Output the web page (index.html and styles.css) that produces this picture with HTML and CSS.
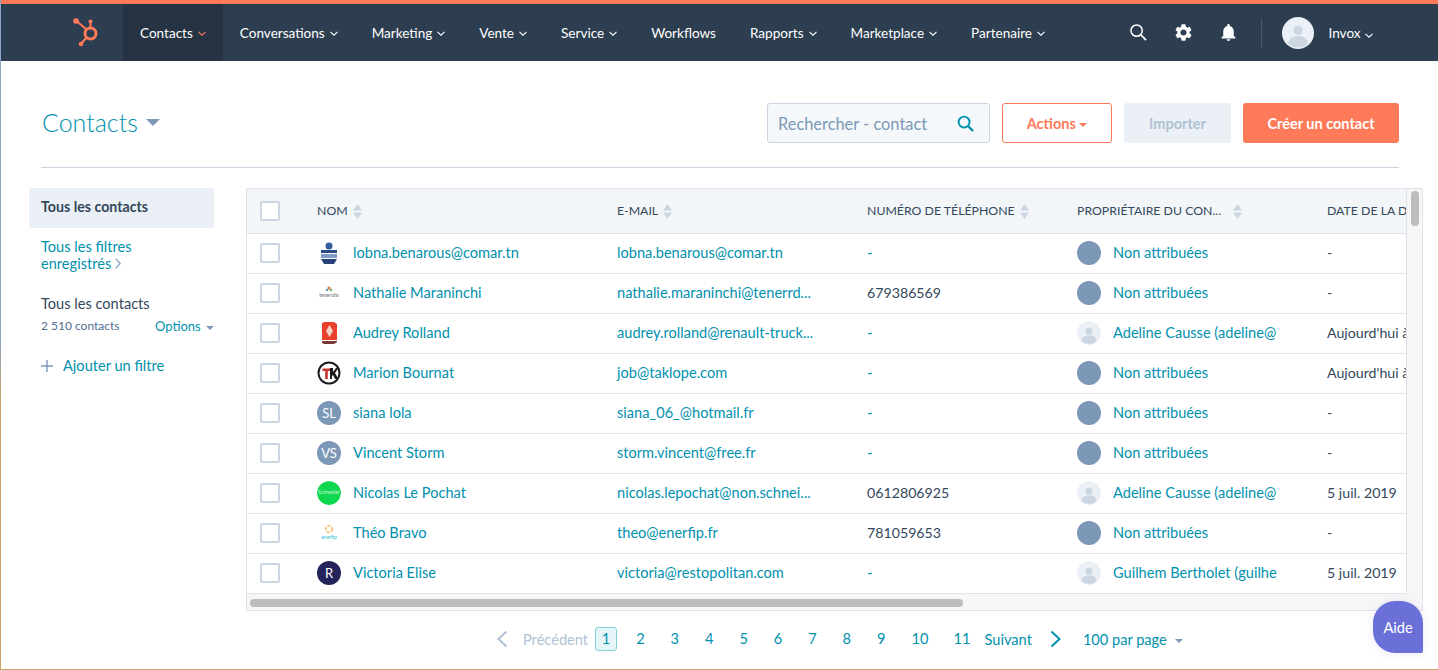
FILE: index.html
```html
<!DOCTYPE html>
<html lang="fr">
<head>
    <meta charset="UTF-8">
    <meta name="viewport" content="width=device-width, initial-scale=1.0">
    <title>Contacts</title>
    <link rel="stylesheet" href="styles.css">
</head>
<body>

    <svg class="defs" width="0" height="0">
        <symbol id="chev" viewBox="0 0 8 5"><path d="M.5.8 4 4.2 7.5.8" fill="none" stroke="currentColor" stroke-width="1.1"/></symbol>
        <symbol id="sort" viewBox="0 0 9 15"><path d="M4.500 0 9 6.500H0z M0 8.500H9L4.500 15z" fill="#cbd6e2"/></symbol>
        <symbol id="person" viewBox="0 0 32 32"><circle cx="16" cy="16" r="16" fill="#eaf0f6"/><circle cx="16" cy="13.500" r="4.500" fill="#cbd6e2"/><path d="M6 27c1-6 5-8 10-8s9 2 10 8a16 16 0 0 1-20 0z" fill="#cbd6e2"/></symbol>
    </svg>

    <nav class="topbar">
        <a class="logo">
            <svg width="26" height="30" viewBox="0 0 26 30">
                <g fill="none" stroke="#ff7a59">
                    <circle cx="17.500" cy="15.500" r="5.500" stroke-width="3"/>
                    <path d="M17.500 9V3M3.500 3l10 8.500M13 20l-4.500 5.500" stroke-width="2"/>
                </g>
                <g fill="#ff7a59"><circle cx="3" cy="3" r="2.800"/><circle cx="17.500" cy="3.500" r="2"/><circle cx="8" cy="26" r="2.300"/></g>
            </svg>
        </a>
        <ul class="menu">
            <li class="active">Contacts <svg class="chev"><use href="#chev"/></svg></li>
            <li>Conversations <svg class="chev"><use href="#chev"/></svg></li>
            <li>Marketing <svg class="chev"><use href="#chev"/></svg></li>
            <li>Vente <svg class="chev"><use href="#chev"/></svg></li>
            <li>Service <svg class="chev"><use href="#chev"/></svg></li>
            <li>Workflows</li>
            <li>Rapports <svg class="chev"><use href="#chev"/></svg></li>
            <li>Marketplace <svg class="chev"><use href="#chev"/></svg></li>
            <li>Partenaire <svg class="chev"><use href="#chev"/></svg></li>
        </ul>
        <div class="nav-tools">
            <svg class="tool" viewBox="0 0 18 18"><circle cx="7" cy="7" r="6" fill="none" stroke="#fff" stroke-width="1.600"/><path d="M11.500 11.500 17 17" stroke="#fff" stroke-width="1.800"/></svg>
            <svg class="tool" viewBox="2 2 20 20"><path fill="#fff" d="M19.140 12.940c.04-.3.06-.61.06-.94 0-.32-.02-.64-.07-.94l2.030-1.580a.49.49 0 0 0 .12-.61l-1.920-3.320a.488.488 0 0 0-.59-.22l-2.390.96c-.5-.38-1.030-.7-1.620-.94l-.36-2.540a.484.484 0 0 0-.48-.41h-3.840c-.24 0-.43.17-.47.41l-.36 2.540c-.59.24-1.130.57-1.620.94l-2.390-.96c-.22-.08-.47 0-.59.22L2.740 8.870c-.12.21-.08.47.12.61l2.030 1.580c-.05.3-.09.63-.09.94s.02.64.07.94l-2.030 1.580a.49.49 0 0 0-.12.61l1.920 3.320c.12.22.37.29.59.22l2.390-.96c.5.38 1.030.7 1.620.94l.36 2.540c.05.24.24.41.48.41h3.840c.24 0 .44-.17.47-.41l.36-2.540c.59-.24 1.130-.56 1.620-.94l2.390.96c.22.08.47 0 .59-.22l1.920-3.320c.12-.22.07-.47-.12-.61l-2.010-1.580zM12 15.600c-1.980 0-3.600-1.620-3.600-3.600s1.620-3.600 3.600-3.600 3.600 1.620 3.600 3.600-1.620 3.600-3.600 3.600z"/></svg>
            <svg class="tool" viewBox="4 2.500 16 19.500"><path fill="#fff" d="M12 22c1.100 0 2-.9 2-2h-4c0 1.100.89 2 2 2zm6-6v-5c0-3.070-1.640-5.640-4.500-6.320V4c0-.83-.67-1.500-1.500-1.500s-1.500.67-1.500 1.500v.68C7.630 5.360 6 7.920 6 11v5l-2 2v1h16v-1l-2-2z"/></svg>
        </div>
        <div class="account">
            <svg class="account-pic"><use href="#person"/></svg>
            <span>Invox <svg class="chev"><use href="#chev"/></svg></span>
        </div>
    </nav>

    <header class="page-head">
        <h1>Contacts <span class="caret big"></span></h1>
        <div class="head-actions">
            <div class="search">
                <span>Rechercher - contact</span>
                <svg width="17" height="17" viewBox="0 0 18 18"><circle cx="7.500" cy="7.500" r="5.800" fill="none" stroke="#0091ae" stroke-width="2"/><path d="M12 12l5 5" stroke="#0091ae" stroke-width="2.400"/></svg>
            </div>
            <button class="btn btn-outline">Actions <span class="caret small"></span></button>
            <button class="btn btn-off">Importer</button>
            <button class="btn btn-main">Créer un contact</button>
        </div>
    </header>

    <main class="content">
        <aside class="sidebar">
            <div class="side-selected">Tous les contacts</div>
            <a class="side-link">Tous les filtres<br>enregistrés <svg class="side-arrow" width="6" height="11" viewBox="0 0 6 11"><path d="M.7.7 5.200 5.500.7 10.300" fill="none" stroke="#7c98b6" stroke-width="1.100"/></svg></a>
            <div class="side-title">Tous les contacts</div>
            <div class="side-meta">
                <span>2 510 contacts</span>
                <a>Options <span class="caret tiny"></span></a>
            </div>
            <a class="side-add"><svg width="12" height="12" viewBox="0 0 12 12"><path d="M6 0v12M0 6h12" stroke="#7c98b6" stroke-width="1.400"/></svg> Ajouter un filtre</a>
        </aside>

        <section class="grid-box">
            <div class="grid-main">
                <div class="grid-view">
                    <table class="contacts">
                        <colgroup><col class="c-check"><col class="c-name"><col class="c-mail"><col class="c-phone"><col class="c-owner"><col class="c-date"></colgroup>
                        <thead>
                            <tr>
                                <th><span class="box"></span></th>
                                <th>NOM <svg class="sort"><use href="#sort"/></svg></th>
                                <th>E-MAIL <svg class="sort"><use href="#sort"/></svg></th>
                                <th>NUMÉRO DE TÉLÉPHONE <svg class="sort"><use href="#sort"/></svg></th>
                                <th>PROPRIÉTAIRE DU CON... <svg class="sort sort-far"><use href="#sort"/></svg></th>
                                <th>DATE DE LA D</th>
                            </tr>
                        </thead>
                        <tbody>
                            <tr>
                                <td><span class="box"></span></td>
                                <td><div class="who">
                                    <svg class="pic" viewBox="0 0 24 24"><circle cx="12" cy="5" r="3.500" fill="#2f5d9b"/><rect x="4" y="9" width="16" height="3" fill="#2b4a86"/><rect x="4" y="13" width="16" height="4" fill="#7f9ac4"/><path d="M4 18h16l-3 5H7z" fill="#27407a"/></svg>
                                    <a>lobna.benarous@comar.tn</a>
                                </div></td>
                                <td><a>lobna.benarous@comar.tn</a></td>
                                <td><a>-</a></td>
                                <td><div class="who"><span class="pic none"></span><a class="owner">Non attribuées</a></div></td>
                                <td>-</td>
                            </tr>
                            <tr>
                                <td><span class="box"></span></td>
                                <td><div class="who">
                                    <svg class="pic" viewBox="0 0 24 24"><circle cx="12" cy="7" r="1.600" fill="#e0784a"/><circle cx="10" cy="9" r="1.300" fill="#5aa9c9"/><circle cx="14" cy="9" r="1.300" fill="#7db36a"/><text x="12" y="16" class="pic-word" fill="#6d6d78">tenerrdis</text></svg>
                                    <a>Nathalie Maraninchi</a>
                                </div></td>
                                <td><a>nathalie.maraninchi@tenerrd...</a></td>
                                <td>679386569</td>
                                <td><div class="who"><span class="pic none"></span><a class="owner">Non attribuées</a></div></td>
                                <td>-</td>
                            </tr>
                            <tr>
                                <td><span class="box"></span></td>
                                <td><div class="who">
                                    <svg class="pic" viewBox="0 0 24 24"><rect x="5" y="1" width="15" height="18" fill="#e8402c"/><path d="M12.500 4 16 10l-3.500 6L9 10z" fill="#f6d2c4"/><rect x="5" y="20" width="15" height="3" fill="#7a3a34"/></svg>
                                    <a>Audrey Rolland</a>
                                </div></td>
                                <td><a>audrey.rolland@renault-truck...</a></td>
                                <td><a>-</a></td>
                                <td><div class="who"><svg class="pic"><use href="#person"/></svg><a class="owner">Adeline Causse (adeline@</a></div></td>
                                <td>Aujourd'hui à</td>
                            </tr>
                            <tr>
                                <td><span class="box"></span></td>
                                <td><div class="who">
                                    <svg class="pic" viewBox="0 0 24 24"><circle cx="12" cy="12" r="10.500" fill="#fff" stroke="#1c1c1c" stroke-width="2"/><path d="M5.500 7.500h8v2.500h-2.700v8H8.200v-8H5.500z" fill="#c8302c"/><path d="M13 7h3v4l3-4h2.500l-3.500 5 3.500 6H18l-2-4-1 1v3h-2z" fill="#1c1c1c"/></svg>
                                    <a>Marion Bournat</a>
                                </div></td>
                                <td><a>job@taklope.com</a></td>
                                <td><a>-</a></td>
                                <td><div class="who"><span class="pic none"></span><a class="owner">Non attribuées</a></div></td>
                                <td>Aujourd'hui à</td>
                            </tr>
                            <tr>
                                <td><span class="box"></span></td>
                                <td><div class="who"><span class="pic none">SL</span><a>siana lola</a></div></td>
                                <td><a>siana_06_@hotmail.fr</a></td>
                                <td><a>-</a></td>
                                <td><div class="who"><span class="pic none"></span><a class="owner">Non attribuées</a></div></td>
                                <td>-</td>
                            </tr>
                            <tr>
                                <td><span class="box"></span></td>
                                <td><div class="who"><span class="pic none">VS</span><a>Vincent Storm</a></div></td>
                                <td><a>storm.vincent@free.fr</a></td>
                                <td><a>-</a></td>
                                <td><div class="who"><span class="pic none"></span><a class="owner">Non attribuées</a></div></td>
                                <td>-</td>
                            </tr>
                            <tr>
                                <td><span class="box"></span></td>
                                <td><div class="who">
                                    <svg class="pic" viewBox="0 0 24 24"><circle cx="12" cy="12" r="12" fill="#0fd850"/><text x="12" y="13" class="pic-word" fill="#c9f7d8">Schneider</text></svg>
                                    <a>Nicolas Le Pochat</a>
                                </div></td>
                                <td><a>nicolas.lepochat@non.schnei...</a></td>
                                <td>0612806925</td>
                                <td><div class="who"><svg class="pic"><use href="#person"/></svg><a class="owner">Adeline Causse (adeline@</a></div></td>
                                <td>5 juil. 2019</td>
                            </tr>
                            <tr>
                                <td><span class="box"></span></td>
                                <td><div class="who">
                                    <svg class="pic" viewBox="0 0 24 24"><circle cx="12" cy="8" r="3.300" fill="none" stroke="#f5b73c" stroke-width="1.400" stroke-dasharray="3 1.500"/><text x="12" y="18" class="pic-word" fill="#35bfd6">enerfip</text></svg>
                                    <a>Théo Bravo</a>
                                </div></td>
                                <td><a>theo@enerfip.fr</a></td>
                                <td>781059653</td>
                                <td><div class="who"><span class="pic none"></span><a class="owner">Non attribuées</a></div></td>
                                <td>-</td>
                            </tr>
                            <tr>
                                <td><span class="box"></span></td>
                                <td><div class="who"><span class="pic navy">R</span><a>Victoria Elise</a></div></td>
                                <td><a>victoria@restopolitan.com</a></td>
                                <td><a>-</a></td>
                                <td><div class="who"><svg class="pic"><use href="#person"/></svg><a class="owner">Guilhem Bertholet (guilhe</a></div></td>
                                <td>5 juil. 2019</td>
                            </tr>
                        </tbody>
                    </table>
                </div>
                <div class="hscroll"><div class="hthumb"></div></div>
            </div>
            <div class="vscroll"><div class="vthumb"></div></div>
        </section>
    </main>

    <footer class="pager">
        <svg class="pg-arrow" viewBox="0 0 12 18"><path d="M10.500 1.500 2.500 9l8 7.500" fill="none" stroke="#b0c1d4" stroke-width="2"/></svg>
        <span class="pg-prev">Précédent</span>
        <a class="pg cur">1</a><a class="pg">2</a><a class="pg">3</a><a class="pg">4</a><a class="pg">5</a><a class="pg">6</a><a class="pg">7</a><a class="pg">8</a><a class="pg">9</a><a class="pg wide">10</a><a class="pg wide">11</a>
        <a class="pg-next">Suivant</a>
        <svg class="pg-arrow next" viewBox="0 0 12 18"><path d="M1.500 1.500 9.500 9l-8 7.500" fill="none" stroke="#0091ae" stroke-width="2"/></svg>
        <a class="pg-size">100 par page <span class="caret tiny"></span></a>
    </footer>

    <button class="help">Aide</button>

</body>
</html>
```

FILE: styles.css
```css
* {
    box-sizing: border-box;
}
html, body {
    margin: 0;
    height: 670px;
    overflow: hidden;
}
body {
    position: relative;
    font-family: Lato, "Open Sans", sans-serif;
    font-size: 14.6px;
    color: #33475b;
    background-color: #fff;
    border-style: solid;
    border-width: 0 0 1px 1px;
    border-image: linear-gradient(#8ba6c6 50%, #c9a36a 60%) 1;
}
a {
    color: #0091ae;
}
.defs {
    position: absolute;
}

/* top bar */
.topbar {
    display: flex;
    align-items: center;
    height: 61px;
    padding-right: 65px;
    font-size: 13.55px;
    color: #fff;
    background-color: #2d3e50;
    border-top: 4px solid #ff7a59;
}
.logo {
    display: flex;
    width: 122px;
    padding-left: 72px;
}
.menu {
    display: flex;
    height: 100%;
    margin: 0;
    padding: 0;
    list-style: none;
}
.menu li {
    display: flex;
    align-items: center;
    gap: 5px;
    padding: 0 17px;
}
.menu li.active {
    background-color: #253342;
}
.menu li.active .chev {
    color: #ff7a59;
}
.chev {
    width: 8px;
    height: 5px;
    margin-top: 2px;
}
.nav-tools {
    display: flex;
    align-items: center;
    gap: 28px;
    margin-left: auto;
    padding-right: 24px;
    border-right: 1px solid #425b76;
    height: 30px;
}
.tool {
    width: 17px;
    height: 17px;
}
.account {
    display: flex;
    align-items: center;
    gap: 15px;
    margin-left: 20px;
}
.account .chev {
    margin-left: 1px;
}
.account-pic {
    width: 32px;
    height: 32px;
}

/* page heading */
.page-head {
    display: flex;
    justify-content: space-between;
    align-items: center;
    height: 107px;
    margin: 0 39px 0 40px;
    padding-top: 18px;
    border-bottom: 1px solid #cbd6e2;
}
h1 {
    margin: 0 0 2px 1px;
    font-size: 25px;
    font-weight: 300;
    color: #0091ae;
}
.caret {
    display: inline-block;
    border-style: solid;
    border-color: #7c98b6 transparent transparent;
}
.caret.big {
    border-width: 7px 7px 0;
    margin: 0 0 7px 1px;
    vertical-align: middle;
}
.caret.small {
    border-width: 4px 4px 0;
    border-top-color: #ff7a59;
    vertical-align: middle;
}
.caret.tiny {
    border-width: 4px 4px 0;
    margin-left: 2px;
    vertical-align: middle;
}
.head-actions {
    display: flex;
    gap: 12px;
}
.search {
    display: flex;
    justify-content: space-between;
    align-items: center;
    width: 223px;
    height: 40px;
    padding: 0 15px 0 10px;
    font-size: 16.4px;
    color: #7c98b6;
    background-color: #f5f8fa;
    border: 1px solid #cbd6e2;
    border-radius: 3px;
}
.btn {
    height: 40px;
    font-family: inherit;
    font-size: 14.5px;
    font-weight: 700;
    border-radius: 3px;
    border: 1px solid transparent;
}
.btn-outline {
    width: 110px;
    color: #ff7a59;
    background-color: #fff;
    border-color: #ff7a59;
}
.btn-off {
    width: 107px;
    color: #b0c1d4;
    background-color: #eaf0f6;
}
.btn-main {
    width: 156px;
    color: #fff;
    background-color: #ff7a59;
}

/* sidebar + table */
.content {
    display: flex;
    padding-top: 20px;
    padding-left: 28px;
}
.sidebar {
    width: 185px;
    margin-right: 32px;
}
.side-selected {
    height: 40px;
    padding: 10px 12px;
    font-size: 14.2px;
    font-weight: 700;
    background-color: #eaf0f6;
    border-radius: 3px;
}
.side-link {
    display: block;
    margin-top: 10px;
    padding-left: 12px;
    line-height: 17px;
}
.side-title {
    margin-top: 23px;
    padding-left: 12px;
}
.side-meta {
    display: flex;
    justify-content: space-between;
    margin-top: 6px;
    padding-left: 12px;
    font-size: 12px;
    color: #516f90;
}
.side-meta a {
    font-size: 13px;
}
.side-add {
    display: flex;
    align-items: center;
    gap: 10px;
    margin-top: 23px;
    padding-left: 12px;
}
.grid-box {
    display: flex;
    width: 1177px;
    height: 423px;
    border: 1px solid #dfe3eb;
    background-color: #f7f5f5;
}
.grid-main {
    width: 1160px;
}
.grid-view {
    height: 405px;
    overflow: hidden;
    background-color: #fff;
    border-right: 1px solid #dfe3eb;
    border-bottom: 1px solid #dfe3eb;
}
.contacts {
    width: 1300px;
    table-layout: fixed;
    border-collapse: collapse;
}
.c-check { width: 56px; }
.c-name { width: 300px; }
.c-mail { width: 250px; }
.c-phone { width: 210px; }
.c-owner { width: 250px; }
.c-date { width: 234px; }
.contacts th {
    height: 44px;
    padding: 0 14px;
    font-size: 12.3px;
    font-weight: 400;
    text-align: left;
    white-space: nowrap;
    overflow: hidden;
    background-color: #f2f6f9;
    border-bottom: 1px solid #dfe3eb;
}
.contacts td {
    height: 40px;
    padding: 0 14px 1px;
    font-size: 14.2px;
    white-space: nowrap;
    overflow: hidden;
    border-bottom: 1px solid #dfe3eb;
}
.contacts td a {
    font-size: 14.6px;
}
.box {
    display: block;
    width: 20px;
    height: 20px;
    margin-left: -1px;
    background-color: #fff;
    border: 2px solid #cbd6e2;
    border-radius: 2px;
}
.sort {
    width: 9px;
    height: 15px;
    margin-left: 2px;
    vertical-align: middle;
}
.sort-far {
    margin-left: 9px;
}
.who {
    display: flex;
    align-items: center;
    gap: 12px;
}
.pic {
    flex: none;
    display: flex;
    justify-content: center;
    align-items: center;
    width: 24px;
    height: 24px;
    font-size: 13px;
    color: #fff;
    border-radius: 50%;
}
.pic.none {
    background-color: #7c98b6;
}
.pic.navy {
    background-color: #25245a;
}
.pic-word {
    font-size: 5px;
    text-anchor: middle;
}
.owner {
    width: 164px;
    overflow: hidden;
}
.hscroll {
    height: 16px;
    padding: 5px 3px;
}
.hthumb {
    width: 713px;
    height: 8px;
    background-color: #bdbdbd;
    border-radius: 4px;
}
.vscroll {
    flex: 1;
    padding: 2px 4px;
}
.vthumb {
    width: 8px;
    height: 35px;
    background-color: #bdbdbd;
    border-radius: 4px;
}

/* pagination */
.pager {
    display: flex;
    align-items: center;
    height: 30px;
    margin-top: 13px;
    padding-left: 495px;
}
.pg-arrow {
    width: 12px;
    height: 18px;
}
.pg-prev {
    margin: 0 7px 0 15px;
    color: #b0c1d4;
}
.pg {
    width: 22px;
    height: 24px;
    margin-right: 12.400px;
    line-height: 24px;
    text-align: center;
}
.pg.cur {
    color: #0091ae;
    background-color: #e5f5f8;
    border: 1px solid #7fd1de;
    border-radius: 3px;
    line-height: 22px;
}
.pg.wide {
    width: 31px;
    margin-right: 11px;
}
.pg-next {
    margin-left: -4px;
}
.pg-arrow.next {
    margin-left: 18px;
}
.pg-size {
    margin-left: 21px;
}
.pg-size .caret {
    margin-left: 4px;
}

.help {
    position: absolute;
    left: 1372px;
    top: 601px;
    width: 50px;
    height: 52px;
    font-family: inherit;
    font-size: 14.6px;
    color: #fff;
    background-color: #6a70d8;
    border: 0;
    border-radius: 22px 22px 2px 22px;
    box-shadow: 0 1px 8px rgba(106, 112, 216, 0.15);
}
```
